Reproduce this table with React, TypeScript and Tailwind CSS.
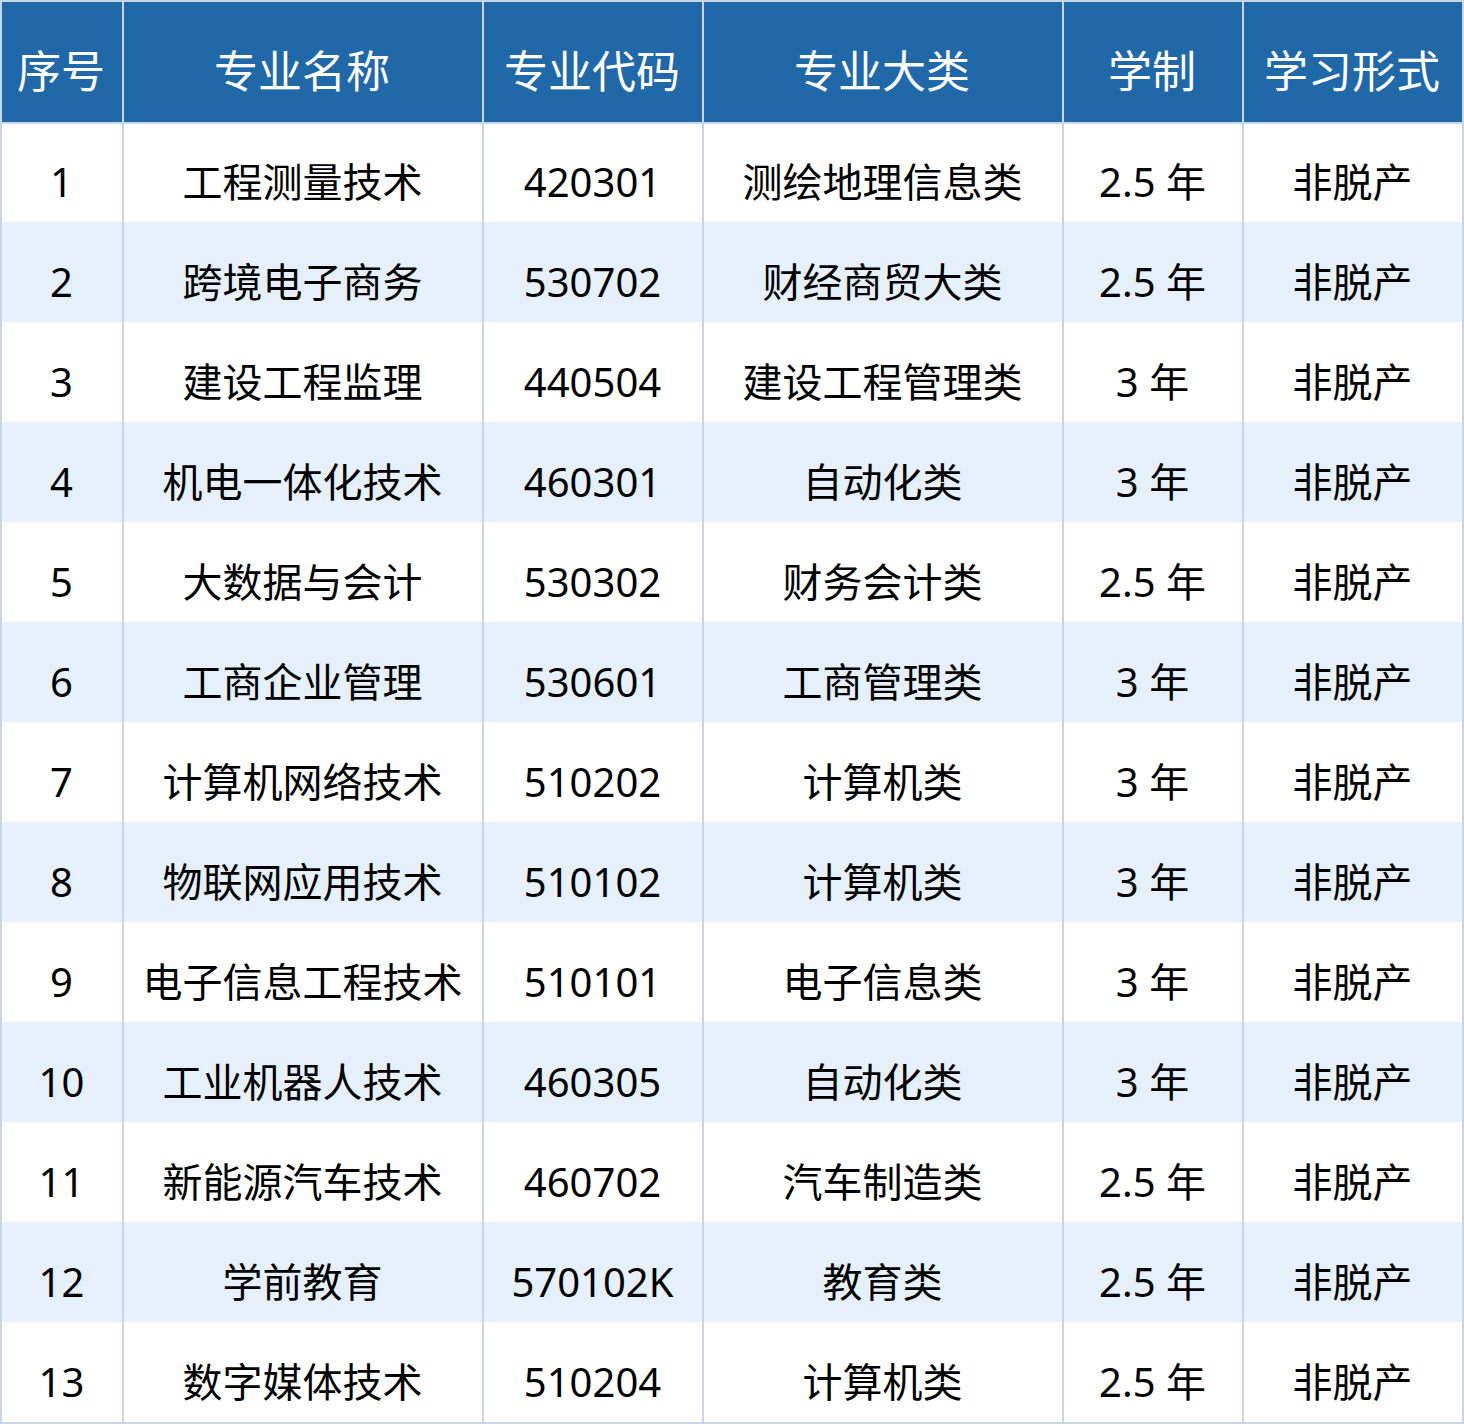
const headers = ["序号", "专业名称", "专业代码", "专业大类", "学制", "学习形式"];
const rows: string[][] = [
  ["1", "工程测量技术", "420301", "测绘地理信息类", "2.5 年", "非脱产"],
  ["2", "跨境电子商务", "530702", "财经商贸大类", "2.5 年", "非脱产"],
  ["3", "建设工程监理", "440504", "建设工程管理类", "3 年", "非脱产"],
  ["4", "机电一体化技术", "460301", "自动化类", "3 年", "非脱产"],
  ["5", "大数据与会计", "530302", "财务会计类", "2.5 年", "非脱产"],
  ["6", "工商企业管理", "530601", "工商管理类", "3 年", "非脱产"],
  ["7", "计算机网络技术", "510202", "计算机类", "3 年", "非脱产"],
  ["8", "物联网应用技术", "510102", "计算机类", "3 年", "非脱产"],
  ["9", "电子信息工程技术", "510101", "电子信息类", "3 年", "非脱产"],
  ["10", "工业机器人技术", "460305", "自动化类", "3 年", "非脱产"],
  ["11", "新能源汽车技术", "460702", "汽车制造类", "2.5 年", "非脱产"],
  ["12", "学前教育", "570102K", "教育类", "2.5 年", "非脱产"],
  ["13", "数字媒体技术", "510204", "计算机类", "2.5 年", "非脱产"],
];

const widths = ["w-[120px]", "w-[360px]", "w-[220px]", "w-[360px]", "w-[180px]", "w-[220px]"];

export default function App() {
  return (
    <div
      className="w-[1464px] h-[1424px] bg-white"
      style={{ fontFamily: '"Noto Sans", "Noto Sans CJK SC", sans-serif' }}
    >
      <div className="border-2 border-[#c8d5e3] w-[1464px]">
        <div className="flex h-[122px] bg-[#2168a8] border-b-2 border-[#c8d5e3]">
          {headers.map((h, i) => (
            <div
              key={i}
              className={`${widths[i]} ${i > 0 ? "border-l-2 border-[#c8d5e3]" : ""} shrink-0 flex items-center justify-center pt-[18px] pr-[2px] text-white text-[44px] leading-none`}
            >
              {h}
            </div>
          ))}
        </div>
        {rows.map((r, ri) => (
          <div
            key={ri}
            className={`flex ${ri === 0 ? "h-[98px]" : "h-[100px]"} ${ri % 2 === 1 ? "bg-[#e6f0fa]" : "bg-white"}`}
          >
            {r.map((c, ci) => (
              <div
                key={ci}
                className={`${widths[ci]} ${ci > 0 ? "border-l-2 border-[#c8d5e3]" : ""} ${ri === 0 ? "pt-[18px]" : "pt-[20px]"} shrink-0 flex items-center justify-center pr-[1px] text-black text-[40px] leading-none`}
              >
                {c}
              </div>
            ))}
          </div>
        ))}
      </div>
    </div>
  );
}
